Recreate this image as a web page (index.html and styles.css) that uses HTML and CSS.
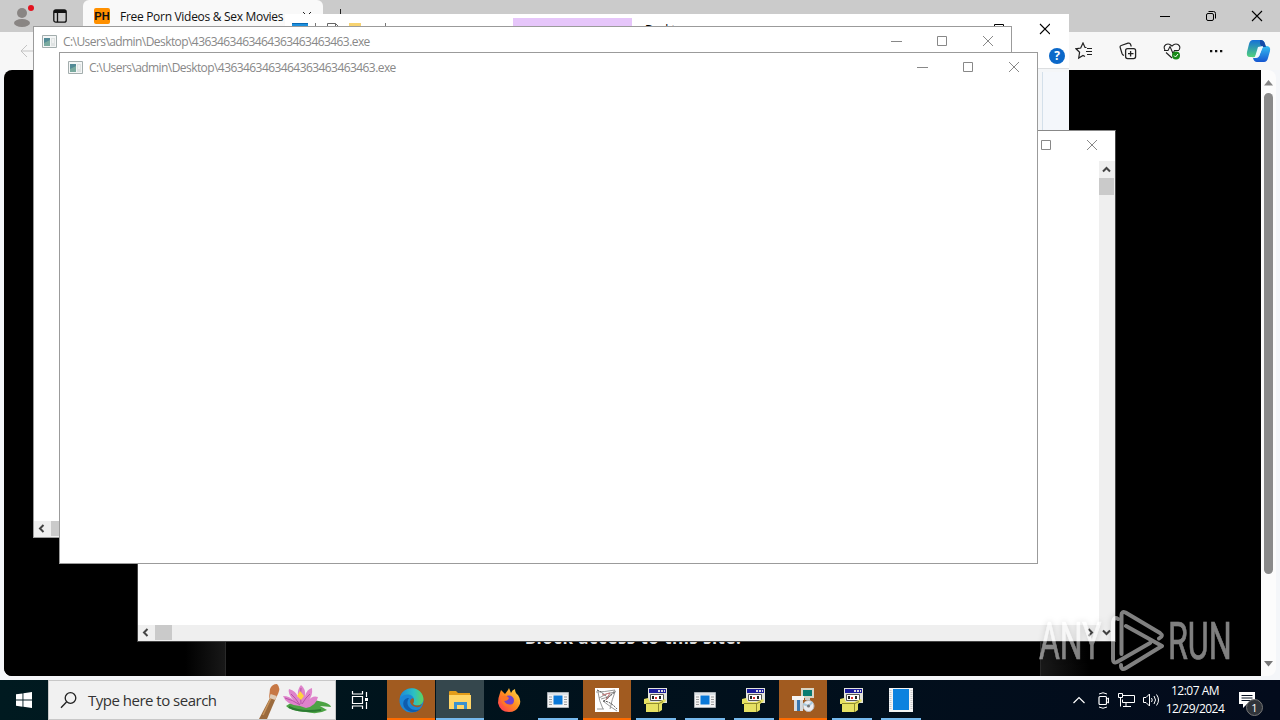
FILE: index.html
```html
<!DOCTYPE html>
<html lang="en">
<head>
<meta charset="utf-8">
<title>Desktop</title>
<link rel="stylesheet" href="styles.css">
</head>
<body>
<svg width="0" height="0" class="defs">
  <defs>
    <linearGradient id="edgeA" x1="0" y1="0" x2="1" y2="0"><stop offset="0" stop-color="#1b8ad8"/><stop offset=".6" stop-color="#2cc0c4"/><stop offset="1" stop-color="#5fd65a"/></linearGradient>
    <linearGradient id="fox" x1="1" y1="0" x2="0" y2="1"><stop offset="0" stop-color="#ffe34a"/><stop offset=".5" stop-color="#ff8a1f"/><stop offset="1" stop-color="#ff2d5c"/></linearGradient>
    <linearGradient id="cop" x1="0" y1="0" x2="0" y2="1"><stop offset="0" stop-color="#1570d8"/><stop offset="1" stop-color="#52d27c"/></linearGradient>
    <linearGradient id="cop2" x1="0" y1="0" x2="0" y2="1"><stop offset="0" stop-color="#35bdf2"/><stop offset="1" stop-color="#1556d0"/></linearGradient>
    <symbol id="conicon" viewBox="0 0 15 13"><path d="M.5.5h14v12H.5z" fill="#f4f6f6" stroke="#a3adad"/><path d="M2 3h6v8H2z" fill="#528a96"/><path d="M2 8l6-3v6H2z" fill="#79aa9f"/><path d="M9 3h4v8H9z" fill="#dfe3e3"/><path d="M10 5h2M10 7h2" stroke="#fff"/></symbol>
    <symbol id="caption" viewBox="0 0 104 12"><path d="M0 6.500h11M46.500 1.500h9v9h-9zM92 1l10 10M102 1L92 11" fill="none" stroke="currentColor"/></symbol>
    <symbol id="box" viewBox="0 0 24 24"><path d="M4 0h19v15H4z" fill="#e4e4dc"/><path d="M5 1h17v4H5z" fill="#1b1b9c"/><path d="M14 2h2v2h-2zM17 2h2v2h-2zM20 2h1v2h-1z" fill="#ddd"/><path d="M6.500 6.500h13v6h-13z" fill="#fff" stroke="#555"/><path d="M8 8h2v3H8zM15 8h2v3h-2z" fill="#222"/><path d="M11 9h2v2h-2z" fill="#d33"/><path d="M0 11l4-1 2 4h8l7-3 1 2-4 3v6l-3 2H2v-8H0z" fill="#e6e163"/><path d="M2 15.500h13l4-2M14.500 16v8" stroke="#8f8a2e" fill="none"/></symbol>
    <symbol id="app" viewBox="0 0 22 16"><path d="M.5.500h21v15H.5z" fill="#f4f4f4" stroke="#aab0b5"/><path d="M1 1h20v2H1z" fill="#dce2e7"/><path d="M6.500 3.500h9v9h-9z" fill="#0a78d7"/><path d="M2 5h3M2 7.500h3M2 10h3M2 12.500h3M17 5h3M17 7.500h3M17 10h3M17 12.500h3" stroke="#999"/></symbol>
  </defs>
</svg>
<main class="desktop">
  <section class="edge">
    <div class="edge-tabs">
      <svg class="avatar" width="26" height="27" viewBox="0 0 26 27"><circle cx="10" cy="9" r="5" fill="#898583"/><ellipse cx="10" cy="19" rx="8" ry="4" fill="#898583"/><circle cx="19" cy="4" r="3" fill="#e3131f"/></svg>
      <svg class="workspaces" width="14" height="14" viewBox="0 0 14 14"><rect x=".8" y=".8" width="12.400" height="12.400" rx="2" fill="none" stroke="#111" stroke-width="1.300"/><path d="M1 2.500h12" stroke="#111" stroke-width="3"/><path d="M4.500 4v9" stroke="#111" stroke-width="1.300"/></svg>
      <div class="tab"><span class="favicon">PH</span><span class="tab-title">Free Porn Videos &amp; Sex Movies</span><svg class="tab-x" width="8" height="8" viewBox="0 0 8 8"><path d="M0 0l8 8M8 0L0 8" stroke="#222"/></svg></div>
      <svg class="newtab" width="11" height="11" viewBox="0 0 11 11"><path d="M5.500 0v11M0 5.500h11" stroke="#222"/></svg>
      <svg class="edge-caption" width="103" height="12" viewBox="0 0 103 12"><path d="M0 6.500h10" stroke="#000"/><rect x="46.500" y="3.500" width="7" height="7" rx="1.500" fill="none" stroke="#000"/><path d="M48.500 1.500h5q2 0 2 2v5" fill="none" stroke="#000"/><path d="M92 1l10 10M102 1L92 11" stroke="#000" stroke-width="1.100"/></svg>
    </div>
    <div class="edge-toolbar">
      <svg class="back" width="14" height="14" viewBox="0 0 14 14"><path d="M7 1L1 7l6 6M1 7h13" fill="none" stroke="#c3c3c3"/></svg>
      <div class="tools">
        <svg width="18" height="18" viewBox="0 0 18 18"><path d="M11.500 5.500H10L8 1 5.700 6 1 6.800l3.600 3.500L3.700 16 8 13.500l2 1" fill="none" stroke="#222" stroke-width="1.200"/><path d="M12 6.500h5M11 9.500h6M12 12.500h5" stroke="#222" stroke-width="1.200"/></svg>
        <svg width="18" height="18" viewBox="0 0 18 18"><rect x="6.600" y="6.600" width="10" height="10" rx="2" fill="none" stroke="#222" stroke-width="1.300"/><path d="M11.600 9v5.500M9 11.600h5.500" stroke="#222" stroke-width="1.300"/><path d="M5 13.500Q3.500 13 3 11.500L1.200 5.500q-.5-1.500 1-2L9 1.200q2-.5 2.500 1l.8 2.300" fill="none" stroke="#222" stroke-width="1.200"/></svg>
        <svg width="18" height="18" viewBox="0 0 18 18"><path d="M2 8C0 5 2 2 5 2q2 0 4 2 2-2 4-2c3 0 5 3 3 6M3 10.500l6 5.500M1 8.500h4l2-4 3 7 1.500-3H16" fill="none" stroke="#222" stroke-width="1.100"/><circle cx="13" cy="13.500" r="4" fill="#168a16"/><path d="M11 13.500l1.500 1.500 2.500-3" fill="none" stroke="#fff"/></svg>
        <svg width="18" height="18" viewBox="0 0 18 18"><path d="M3 8h2.300v2.300H3zM8 8h2.300v2.300H8zM13 8h2.300v2.300H13z" fill="#111"/></svg>
        <svg class="copilot" width="25" height="24" viewBox="0 0 25 24"><path d="M7 1h8q3 0 4 4l1 3h-4q-3 0-4 3l-2 5q-1 3-4 2H4q-4 0-3-5L3 5q1-4 4-4z" fill="url(#cop)"/><path d="M18 23h-7q-3 0-4-4h3q3 0 4-4l2-5q1-3 4-3 5 0 4 5l-2 7q-1 4-4 4z" fill="url(#cop2)"/><path d="M14 1q4 0 5 4l1 3h-3q-2 0-3-3z" fill="#154aa8"/><path d="M12 8l5-1-4 10-4 1z" fill="#eef8ff"/></svg>
      </div>
    </div>
    <div class="edge-body">
      <div class="page"><div class="fade left"></div><p class="page-text">Block access to this site.</p><div class="fade right"></div></div>
      <div class="edge-scroll"><svg width="9" height="6" viewBox="0 0 9 6"><path d="M4.500 0L9 5.500H0z" fill="#858585"/></svg><i></i><svg width="9" height="6" viewBox="0 0 9 6"><path d="M0 0h9L4.500 5.500z" fill="#777"/></svg></div>
    </div>
  </section>

  <section class="explorer">
    <header class="ex-title">
      <svg width="100" height="16" viewBox="0 0 100 16"><path d="M0 0h16v14H0z" fill="#1c8fdd"/><path d="M0 0h16v1H0z" fill="#0969b4"/><path d="M23.500 0v14M93.500 0v14" stroke="#777"/><path d="M35.500.5h8l3 3v12h-11zM43.500.5v3h3" fill="#fff" stroke="#666"/><path d="M57 0h12v15H57z" fill="#f7d371"/></svg>
      <span class="manage"></span><span class="ex-name">Desktop</span>
      <span class="ex-buttons"><svg width="56" height="12" viewBox="0 0 56 12"><path d="M.5 1.500h9v9h-9z" fill="none" stroke="#000"/><path d="M46 1l10 10M56 1L46 11" stroke="#000" stroke-width="1.100"/></svg></span>
    </header>
    <div class="ex-ribbon"><b class="help">?</b></div>
    <div class="ex-pane"><i></i></div>
  </section>

  <section class="console third">
    <header><svg class="con-cap" width="104" height="12"><use href="#caption"/></svg></header>
    <div class="con-body"><div class="vbar"><svg width="9" height="7" viewBox="0 0 9 7"><path d="M1 5.500L4.500 2 8 5.500" fill="none" stroke="#444" stroke-width="2"/></svg><i></i></div></div>
    <div class="hbar"><svg width="7" height="9" viewBox="0 0 7 9"><path d="M5.500 1L2 4.500 5.500 8" fill="none" stroke="#444" stroke-width="2"/></svg><i></i><svg class="end" width="7" height="9" viewBox="0 0 7 9"><path d="M1.500 1L5 4.500 1.500 8" fill="none" stroke="#444" stroke-width="2"/></svg><svg class="down" width="9" height="7" viewBox="0 0 9 7"><path d="M1 1.500L4.500 5 8 1.500" fill="none" stroke="#444" stroke-width="2"/></svg></div>
  </section>
  <section class="console first">
    <header><svg class="con-icon" width="15" height="13"><use href="#conicon"/></svg><span>C:\Users\admin\Desktop\4363463463464363463463463.exe</span><svg class="con-cap" width="104" height="12"><use href="#caption"/></svg></header>
    <div class="con-body"></div>
    <div class="hbar"><svg width="7" height="9" viewBox="0 0 7 9"><path d="M5.500 1L2 4.500 5.500 8" fill="none" stroke="#444" stroke-width="2"/></svg><i></i></div>
  </section>
  <section class="console second">
    <header><svg class="con-icon" width="15" height="13"><use href="#conicon"/></svg><span>C:\Users\admin\Desktop\4363463463464363463463463.exe</span><svg class="con-cap" width="104" height="12"><use href="#caption"/></svg></header>
  </section>

  <footer class="taskbar">
    <div class="start"><svg width="16" height="16" viewBox="0 0 16 16"><path d="M0 2.300L6.500 1.400v6.200H0zM7.400 1.200L16 0v7.600H7.400zM0 8.500h6.500v6.200L0 13.800zM7.400 8.500H16V16l-8.600-1.200z" fill="#fff"/></svg></div>
    <div class="search">
      <svg width="17" height="17" viewBox="0 0 17 17"><circle cx="10.500" cy="6" r="5.300" fill="none" stroke="#222" stroke-width="1.300"/><path d="M6.500 10L1 15.700" stroke="#222" stroke-width="1.400"/></svg>
      <span>Type here to search</span>
      <svg class="lily" width="76" height="37" viewBox="0 0 76 37"><path d="M12 14L0 37h8l9-21z" fill="#9b6b3e"/><path d="M12 16L4 33" stroke="#c7935c" stroke-width="1.500"/><path d="M10 16l1-9q2-5 7-5 4 4 1 10l-3 6z" fill="#c77845"/><path d="M11 14l6 2" stroke="#dfcbb6" stroke-width="4"/><path d="M27 24q8-7 26-6 18 2 19 7l-11-1 7 4q-9 5-21 2-16-1-20-6z" fill="#4ca344"/><path d="M30 25q12 6 32 3" stroke="#2c7b32" fill="none" stroke-width="2"/><path d="M41 24q-14-1-17-10 7 0 11 5-7-8-5-12 7 2 9 8-1-8 3-12 5 4 4 11 2-7 7-8 1 8-4 13 4-6 10-4-2 9-12 11z" fill="#df83cb"/><path d="M41 23q-5-8-9-11M41 23q-7-5-15-7M42 22q-1-10 0-16M43 22q4-7 8-10" stroke="#b752a8" fill="none"/><path d="M38 14l3-5 4 5-3 4z" fill="#ffd43d"/></svg>
    </div>
    <div class="task"><svg width="18" height="18" viewBox="0 0 18 18"><path d="M1.500 5.500h10v7h-10zM1.500 0v3h10V0M1.500 18v-3h10v3M15.500 1v5M15.500 11v7" fill="none" stroke="#fff" stroke-width="1.200"/><path d="M14 7h3v3h-3z" fill="#fff"/></svg></div>
    <div class="task alert"><svg width="25" height="25" viewBox="0 0 25 25"><circle cx="12.500" cy="12.500" r="12" fill="#1b86d6"/><path d="M1 10C3-1 18-3 23 6c4 8-1 13-8 11-2-1-1-2 0-4 1-7-9-9-14-3z" fill="url(#edgeA)"/><path d="M10 10c-4 6 0 12 7 12 3 0 4-1 5-2-4 6-13 5-17-1-2-4 0-9 5-9z" fill="#0f5cad"/><path d="M14 16q4 3 9 0-2 4-6 3-5-1-6-5 0-3 3-4 2 2 0 6z" fill="#a15b20"/></svg></div>
    <div class="task active"><svg width="22" height="19" viewBox="0 0 22 19"><path d="M0 1q0-1 1-1h6l2 2h12v4H0z" fill="#e39c19"/><path d="M0 4h22v14H0z" fill="#ffd567"/><path d="M5 18v-7h13v7h-3v-4H8v4z" fill="#3a91ce"/></svg></div>
    <div class="task"><svg width="24" height="24" viewBox="0 0 24 24"><path d="M3 5l1-3 4 4 3-4 1-2 2 5q1-3 4-4 0 4 3 6 4 6 1 11-3 6-10 6-9 0-11-9 0-5 2-10z" fill="url(#fox)"/><circle cx="12" cy="12.500" r="5" fill="#7043ce"/><path d="M4 9q5-3 8 1-1 3-5 3 3 5 9 3-3 4-8 2-5-4-4-9z" fill="#ff7527"/></svg></div>
    <div class="task run"><svg width="22" height="16"><use href="#app"/></svg></div>
    <div class="task alert"><svg width="24" height="24" viewBox="0 0 24 24"><path d="M0 0h24v24H0z" fill="#fff"/><path d="M1 4q8 0 19-2-4 7-14 9M4 10q9-6 16-6-3 7-5 17M3 4q1 9 5 17M8 13l8 6 6 4M2 21h7" stroke="#999" fill="none"/><path d="M2 2q7 3 11 9M9 13q5-4 12-10M8 13q7 0 14 8" stroke="#3f3f3f" fill="none" stroke-dasharray="2 1"/><path d="M7 7l8-2-4 7" fill="none" stroke="#c77878"/></svg></div>
    <div class="task run"><svg width="24" height="24"><use href="#box"/></svg></div>
    <div class="task run"><svg width="22" height="16"><use href="#app"/></svg></div>
    <div class="task run"><svg width="24" height="24"><use href="#box"/></svg></div>
    <div class="task alert"><svg width="24" height="24" viewBox="0 0 24 24"><path d="M10 0h13v10H10z" fill="#d8d4c4"/><path d="M12 2h9v6h-9z" fill="#087b70"/><path d="M3 11h9v12H3z" fill="#d8dadd"/><path d="M1 8h12v4H1z" fill="#f5f5f5"/><path d="M6 12h3v11H6z" fill="#3976ae"/><path d="M14 10h5v2h-5z" fill="#ccc"/><circle cx="17.500" cy="18" r="5.500" fill="#ececf0" stroke="#bbb"/><path d="M17.500 18l-5-2M17.500 18l4-4" stroke="#a8c9dd" stroke-width="2"/><circle cx="17.500" cy="18" r="1.500" fill="#777"/></svg></div>
    <div class="task run"><svg width="24" height="24"><use href="#box"/></svg></div>
    <div class="task run"><svg width="24" height="24" viewBox="0 0 24 24"><path d="M0 0h24v24H0z" fill="#f4f4f4"/><path d="M4 1h16v21H4z" fill="#0c82df"/><path d="M1.500 2v20M22.500 2v20" stroke="#ccc" stroke-dasharray="1 1" stroke-width="2"/></svg></div>
    <div class="tray">
      <svg class="chev" width="12" height="8" viewBox="0 0 12 8"><path d="M.5 7L6 1.500 11.500 7" fill="none" stroke="#fff" stroke-width="1.200"/></svg>
      <svg class="cam" width="12" height="17" viewBox="0 0 12 17"><rect x="1" y="4.500" width="7.500" height="8" rx="1" fill="none" stroke="#fff" stroke-width="1.200"/><path d="M8.500 7.500l2-1.500v5l-2-1.500M1 2q4-2.500 8 0M1 15q4 2.500 8 0" fill="none" stroke="#fff"/></svg>
      <svg class="net" width="17" height="14" viewBox="0 0 17 14"><path d="M5 2.500h11.500v7H4.500v-3M8 10v3.500M5 13.500h8M.5.500h4v4h-4zM2.500 5v8.500" fill="none" stroke="#fff"/></svg>
      <svg class="vol" width="17" height="14" viewBox="0 0 17 14"><path d="M.5 4.500h2.500L6.500 1v12L3 9.500H.5zM8.500 5q1.500 2 0 4M11 3q3 4 0 8M13.500 1.500q4 5.500 0 11" fill="none" stroke="#fff"/></svg>
      <div class="clock"><span>12:07 AM</span><span class="date">12/29/2024</span></div>
      <div class="notify"><svg width="16" height="16" viewBox="0 0 16 16"><path d="M0 0h16v12h-8l-4 4v-4H0z" fill="#fff"/><path d="M2.500 3.500h11M2.500 6h11M2.500 8.500h11" stroke="#071224"/></svg><b>1</b></div>
    </div>
  </footer>

  <svg class="brand" width="206" height="72" viewBox="0 0 206 72">
    <g class="brand-text"><text transform="translate(5 54) scale(.615 1)">ANY</text><text transform="translate(134 54) scale(.62 1)">RUN</text></g>
    <path d="M84 14q-4-3-5 3v37q0 5 4 3l33-19M87.500 49V10q0-4 4-2.500L126 28q4 3-1 5.500M92 21l36 20-36 22q-5 3-5-3" class="brand-line"/>
  </svg>
</main>
</body>
</html>
```

FILE: styles.css
```css
* { box-sizing: border-box; }
body { margin: 0; font-family: "Open Sans", "Noto Sans", sans-serif; overflow: hidden; }
svg { display: block; flex: none; }
.defs { position: absolute; }
.desktop { position: relative; width: 1280px; height: 720px; overflow: hidden; background: #000; display: flex; flex-direction: column; }

.edge { height: 680px; background: #f4f6f9; display: flex; flex-direction: column; }
.edge-tabs { height: 32px; background: #cbcbcb; display: flex; align-items: flex-start; }
.avatar { margin: 4px 0 0 12px; }
.workspaces { margin: 9px 0 0 15px; }
.tab { width: 240px; height: 32px; margin-left: 16px; background: #f9f9f9; border-radius: 6px 6px 0 0; display: flex; align-items: center; padding-left: 11px; }
.favicon { width: 16px; height: 16px; background: #ff9000; border-radius: 2px; font: bold 11px/16px "Liberation Sans", sans-serif; text-align: center; color: #111; }
.tab-title { width: 183px; margin-left: 10px; font-size: 12px; letter-spacing: -.3px; color: #111; white-space: nowrap; }
.tab-x { flex: none; }
.newtab { margin: 9px 0 0 12px; }
.edge-caption { margin: 10px 17px 0 auto; }
.edge-toolbar { height: 38px; background: #f7f7f7; display: flex; align-items: center; justify-content: space-between; padding: 0 9px 0 20px; }
.tools { display: flex; align-items: center; gap: 26px; }
.copilot { margin-left: -5px; }
.edge-body { flex: 1; display: flex; padding: 0 4px 4px 4px; }
.page { flex: 1; background: #000; border-radius: 8px 0 0 8px; overflow: hidden; display: flex; align-items: flex-end; }
.fade { height: 36px; width: 222px; }
.left { background: linear-gradient(90deg, #000 82%, #181818); border-right: 1px solid #292929; }
.right { background: linear-gradient(90deg, #191919, #000 22%); border-left: 1px solid #292929; width: 221px; }
.page-text { flex: 1; margin: 0 0 26px; text-align: center; color: #ddd; font: bold 17px/24px "Open Sans", sans-serif; letter-spacing: .45px; }
.edge-scroll { width: 15px; background: #fcfcfc; border-radius: 0 8px 8px 0; display: flex; flex-direction: column; align-items: center; padding: 10px 0 9px; }
.edge-scroll i { width: 9px; height: 481px; margin: 7px 0 auto; border-radius: 5px; background: #8a8a8a; }

.explorer { position: absolute; left: 285px; top: 14px; width: 784px; height: 580px; background: #fff; display: flex; flex-direction: column; }
.ex-title { height: 30px; display: flex; align-items: flex-start; padding-left: 7px; }
.ex-title > svg { margin-top: 9px; }
.manage { width: 119px; height: 26px; margin: 4px 0 0 121px; background: #e6c6fa; }
.ex-name { margin: 7px 0 0 13px; font-size: 12px; line-height: 17px; letter-spacing: -.3px; }
.ex-buttons { margin: 9px 19px 0 auto; }
.ex-ribbon { height: 25px; border-bottom: 1px solid #dcdee0; display: flex; align-items: center; justify-content: flex-end; padding-right: 4px; }
.help { width: 16px; height: 16px; border-radius: 50%; background: #0b68c9; color: #fff; font-size: 12px; line-height: 16px; text-align: center; }
.ex-pane { flex: 1; background: #f4f6f8; display: flex; justify-content: flex-end; }
.ex-pane i { width: 27px; margin-top: 3px; border-left: 1px solid #d4e0ea; background: #f4f7fb; }

.console { position: absolute; width: 979px; height: 512px; background: #fff; border: 1px solid #9b9b9b; display: flex; flex-direction: column; color: #888; }
.first { left: 33px; top: 26px; }
.second { left: 59px; top: 52px; }
.third { left: 137px; top: 130px; border-color: #444; border-top-color: #888; }
.console header { height: 28px; display: flex; align-items: center; padding: 0 16px 0 8px; flex: none; }
.console header span { margin-left: 6px; font-size: 12px; letter-spacing: -.57px; line-height: 16px; white-space: nowrap; padding-top: 2px; }
.con-cap { margin-left: auto; }
.con-body { flex: 1; display: flex; justify-content: flex-end; }
.vbar { width: 16px; margin-top: 2px; background: #efefef; display: flex; flex-direction: column; align-items: flex-start; padding-top: 5px; }
.vbar svg { margin-left: 3px; }
.vbar i { width: 15px; height: 17px; background: #cacaca; margin-top: 5px; }
.hbar { height: 16px; background: #efefef; display: flex; align-items: center; padding: 0 4px 1px; }
.hbar i { width: 17px; height: 15px; margin-left: 6px; background: #cacaca; }
.hbar .end { margin-left: auto; }
.hbar .down { margin-left: 8px; }

.taskbar { height: 40px; display: flex; background: linear-gradient(90deg, #001a20 0, #00131c 35%, #030b1c 100%); color: #fff; }
.start { width: 48px; display: grid; place-items: center; }
.search { width: 288px; background: #f1f1f1; border: 1px solid #c8c8c8; display: flex; align-items: center; padding-left: 11px; color: #333; }
.search span { margin-left: 11px; font-size: 15px; letter-spacing: -.5px; white-space: nowrap; }
.lily { margin-left: auto; align-self: flex-end; }
.task { width: 48px; height: 40px; display: grid; place-items: center; margin-right: 1px; flex: none; }
.search + .task { margin-right: 3px; }
.alert { background: #a15b20; border-bottom: 2px solid #ff6b00; padding-top: 2px; }
.active { background: #35474d; border-bottom: 2px solid #76b9ed; padding-top: 2px; }
.run { background: linear-gradient(#76b9ed, #76b9ed) center bottom / 40px 2px no-repeat; }
.tray { margin-left: auto; width: 207px; display: flex; align-items: center; }
.cam { margin-left: 13px; }
.net { margin-left: 8px; }
.vol { margin-left: 8px; }
.clock { width: 66px; margin-left: 2px; display: flex; flex-direction: column; align-items: center; font-size: 12px; line-height: 18px; letter-spacing: -.5px; padding-bottom: 1px; }
.date { letter-spacing: -.5px; }
.notify { position: relative; margin-left: 11px; }
.notify b { position: absolute; left: 7px; top: 7px; width: 17px; height: 17px; border-radius: 50%; background: #30343a; border: 1px solid #777; font: 11px/15px "Open Sans", sans-serif; text-align: center; }

.brand { position: absolute; left: 1034px; top: 605px; opacity: .5; filter: drop-shadow(0 0 3px rgba(0, 0, 0, .3)); }
.brand-text { font-family: Roboto, sans-serif; font-size: 52px; fill: #fff; stroke: #fff; stroke-width: .7; }
.brand-line { fill: none; stroke: #fff; stroke-width: 4; stroke-linejoin: round; stroke-linecap: round; }
```
